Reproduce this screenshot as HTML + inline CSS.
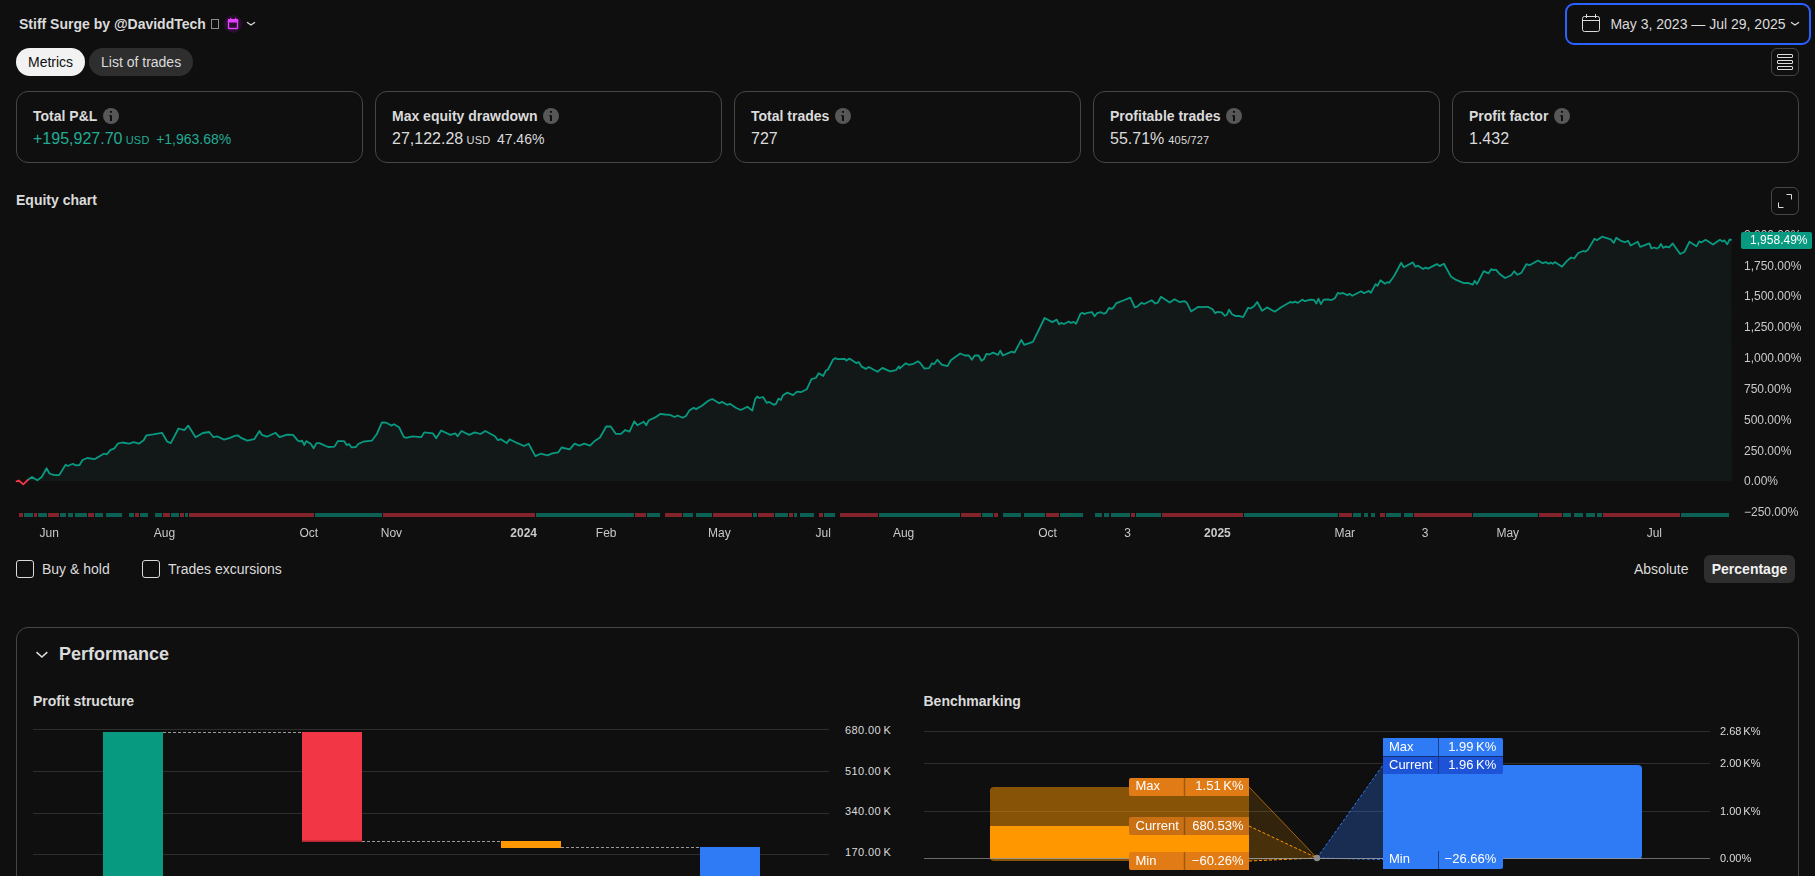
<!DOCTYPE html>
<html lang="en"><head><meta charset="utf-8"><title>Strategy report</title>
<style>
*{box-sizing:border-box;margin:0;padding:0}
html,body{width:1815px;height:876px;overflow:hidden;background:#0f0f0f}
body{position:relative;font-family:"Liberation Sans",Arial,sans-serif;color:#dbdbdb;font-size:14px}
.abs{position:absolute;white-space:nowrap}
.b{font-weight:bold}
.title{left:19px;top:16px;font-size:14px;line-height:16px;font-weight:bold;color:#dbdbdb}
.tab{top:48px;height:28px;border-radius:14px;line-height:28px;font-size:14px;padding:0 12px}
.card{top:91px;width:347px;height:72px;border:1px solid #464646;border-radius:12px}
.card .t{position:absolute;left:16px;top:16px;font-weight:bold;font-size:14px;line-height:16px;color:#dbdbdb;white-space:nowrap}
.card .v{position:absolute;left:16px;top:37px;font-size:16px;line-height:20px;white-space:nowrap;color:#dbdbdb}
.card .v small{font-size:11px;margin-left:3.300px;letter-spacing:0.200px}
.card .v span{font-size:14px;margin-left:6.600px}
.info{display:inline-block;vertical-align:top;margin-left:6px}
.card .green{color:#22ab94}
.sq{width:28px;height:28px;border:1px solid #464646;border-radius:6px}
.cb{width:18px;height:18px;border:1px solid #dbdbdb;border-radius:3px;top:560px}
.lbl{top:560px;line-height:18px;font-size:14px}
svg text{font-family:"Liberation Sans",Arial,sans-serif}
</style></head><body>

<div class="abs title">Stiff Surge by @DaviddTech <span style="display:inline-block;width:8px;height:10px;border:1px solid #8f8f8f;vertical-align:0px;margin-left:1px"></span></div>
<svg class="abs" style="left:224px;top:15px" width="18" height="18" viewBox="0 0 18 18"><circle cx="9" cy="9" r="9" fill="#2a0f30"/><rect x="4.500" y="4.700" width="9" height="8.800" rx="0.800" fill="none" stroke="#e040fb" stroke-width="1.400"/><rect x="3.800" y="4" width="10.400" height="3.500" rx="1" fill="#e040fb"/><rect x="6" y="3" width="1.200" height="2" fill="#e040fb"/><rect x="11" y="3" width="1.200" height="2" fill="#e040fb"/></svg>
<svg class="abs" style="left:245px;top:19.300px" width="12" height="10" viewBox="0 0 12 10"><path d="M2 3.200l4 2.900 4-2.900" fill="none" stroke="#dbdbdb" stroke-width="1.200"/></svg>

<div class="abs" style="left:1565px;top:3px;width:246px;height:42px;border:2px solid #2962ff;border-radius:9px"></div>
<svg class="abs" style="left:1581px;top:13px" width="20" height="20" viewBox="0 0 20 20"><rect x="1.5" y="3.5" width="17" height="15" rx="2" fill="none" stroke="#dbdbdb" stroke-width="1"/><path d="M1.500 7.500h17M5.500 1v4M14.500 1v4" stroke="#dbdbdb" stroke-width="1" fill="none"/></svg>
<div class="abs" style="left:1610.400px;top:15px;font-size:14px;line-height:18px;color:#dbdbdb">May 3, 2023 — Jul 29, 2025</div>
<svg class="abs" style="left:1789px;top:19.300px" width="12" height="10" viewBox="0 0 12 10"><path d="M2 3.200l4 2.900 4-2.900" fill="none" stroke="#dbdbdb" stroke-width="1.200"/></svg>

<div class="abs tab" style="left:16px;background:#f2f2f2;color:#0f0f0f">Metrics</div>
<div class="abs tab" style="left:89px;background:#2e2e2e;color:#dbdbdb">List of trades</div>
<div class="abs sq" style="left:1771px;top:48px"></div>
<svg class="abs" style="left:1776px;top:53px" width="18" height="18" viewBox="0 0 18 18"><g fill="none" stroke="#dbdbdb" stroke-width="1"><rect x="1.5" y="1.5" width="15" height="3" rx="0.5"/><rect x="1.5" y="7.5" width="15" height="3" rx="0.5"/><rect x="1.5" y="13.5" width="15" height="3" rx="0.5"/></g></svg>

<div class="abs card" style="left:16px"><div class="t">Total P&amp;L<svg class="info" width="16" height="16" viewBox="0 0 16 16"><circle cx="8" cy="8" r="8" fill="#575757"/><path d="M7 3h2v1.800h-2zM6 7.200h3v5.800h-2v-4.700h-1z" fill="#0f0f0f"/></svg></div><div class="v green">+195,927.70<small>USD</small><span>+1,963.68%</span></div></div>
<div class="abs card" style="left:375px"><div class="t">Max equity drawdown<svg class="info" width="16" height="16" viewBox="0 0 16 16"><circle cx="8" cy="8" r="8" fill="#575757"/><path d="M7 3h2v1.800h-2zM6 7.200h3v5.800h-2v-4.700h-1z" fill="#0f0f0f"/></svg></div><div class="v">27,122.28<small>USD</small><span>47.46%</span></div></div>
<div class="abs card" style="left:734px"><div class="t">Total trades<svg class="info" width="16" height="16" viewBox="0 0 16 16"><circle cx="8" cy="8" r="8" fill="#575757"/><path d="M7 3h2v1.800h-2zM6 7.200h3v5.800h-2v-4.700h-1z" fill="#0f0f0f"/></svg></div><div class="v">727</div></div>
<div class="abs card" style="left:1093px"><div class="t">Profitable trades<svg class="info" width="16" height="16" viewBox="0 0 16 16"><circle cx="8" cy="8" r="8" fill="#575757"/><path d="M7 3h2v1.800h-2zM6 7.200h3v5.800h-2v-4.700h-1z" fill="#0f0f0f"/></svg></div><div class="v">55.71%<small style="margin-left:4px">405/727</small></div></div>
<div class="abs card" style="left:1452px"><div class="t">Profit factor<svg class="info" width="16" height="16" viewBox="0 0 16 16"><circle cx="8" cy="8" r="8" fill="#575757"/><path d="M7 3h2v1.800h-2zM6 7.200h3v5.800h-2v-4.700h-1z" fill="#0f0f0f"/></svg></div><div class="v">1.432</div></div>

<div class="abs b" style="left:16px;top:192px;line-height:16px">Equity chart</div>
<div class="abs sq" style="left:1771px;top:187px"></div>
<svg class="abs" style="left:1776px;top:192px" width="18" height="18" viewBox="0 0 18 18"><path d="M10.5 2.5h5v5M2.5 10.500v5h5" fill="none" stroke="#dbdbdb" stroke-width="1"/></svg>


<div class="abs cb" style="left:16px"></div><div class="abs lbl" style="left:42px">Buy &amp; hold</div>
<div class="abs cb" style="left:142px"></div><div class="abs lbl" style="left:168px">Trades excursions</div>
<div class="abs" style="left:1634px;top:560px;line-height:18px">Absolute</div>
<div class="abs b" style="left:1704px;top:555px;width:91px;height:28px;line-height:28px;text-align:center;background:#2e2e2e;border-radius:6px;color:#f2f2f2">Percentage</div>

<div class="abs" style="left:16px;top:627px;width:1783px;height:300px;border:1px solid #464646;border-radius:12px"></div>
<svg class="abs" style="left:34px;top:647px" width="16" height="14" viewBox="0 0 16 14"><path d="M2.500 5.200l5.400 4.800 5.400-4.800" fill="none" stroke="#dbdbdb" stroke-width="1.600"/></svg>
<div class="abs b" style="left:59px;top:643px;font-size:18px;line-height:22px">Performance</div>
<div class="abs b" style="left:33px;top:693px;line-height:16px">Profit structure</div>
<div class="abs b" style="left:923.500px;top:693px;line-height:16px">Benchmarking</div>

<svg class="abs" style="left:0;top:700px" width="910" height="176" viewBox="0 700 910 176">
<g stroke="#2e2e2e" stroke-width="1">
<path d="M33 729.500H829M33 771.500H829M33 813.500H829M33 854.500H829"/>
</g>
<g font-size="11" fill="#dbdbdb" style="letter-spacing:0.400px;word-spacing:-0.900px">
<text x="845" y="734">680.00 K</text><text x="845" y="775">510.00 K</text><text x="845" y="815">340.00 K</text><text x="845" y="856">170.00 K</text>
</g>
<rect x="103" y="732" width="60" height="150" fill="#089981"/>
<rect x="302" y="732" width="60" height="110" fill="#f23645"/>
<rect x="302" y="840.500" width="60" height="1.500" fill="#b22833"/>
<rect x="501" y="841" width="60" height="7" fill="#ff9800"/>
<rect x="700" y="847" width="60" height="40" fill="#2f7af5"/>
<g stroke="#9a9a9a" stroke-width="1" stroke-dasharray="3 2" fill="none">
<path d="M163 732.500H302M362 841.500H501M561 847.500H700"/>
</g>
</svg>

<svg class="abs" style="left:0;top:225px;will-change:transform" width="1815" height="325" viewBox="0 225 1815 325">
<path d="M27.7,481 L27.7,480 L32,477 L37.3,480.3 L41.7,477 L46.6,468.3 L49.5,473.5 L54.3,475.1 L59.2,475.1 L65.6,464.8 L67.9,466 L72.8,463.8 L75.7,465.4 L79.6,465 L82.5,460 L87.3,458 L94.5,459.2 L103.8,453.7 L106.7,454.3 L110.6,449.9 L114.5,448.3 L117.8,443.7 L122.3,442.5 L129,443.7 L133.9,442.1 L138.8,443.7 L143.6,440.2 L146.5,435.3 L153.3,434.3 L162,432.8 L167.3,441.7 L170.8,443.1 L178.5,428.5 L184.4,430.1 L188.2,425.6 L195.6,437.2 L202.8,433 L209.2,432 L213.5,437.2 L217,436.3 L224.1,439.6 L230,437.8 L234.8,435.9 L237.7,435.3 L241.6,438.2 L247.4,440.7 L254.2,439.2 L259.5,431 L262,434.9 L266.8,436.7 L275.6,432.8 L279.5,437.2 L287.2,434.7 L293,434.9 L297.9,440.7 L300,441.5 L302,440.7 L304.3,445 L306.2,441.1 L310.7,443.7 L313.6,448.3 L316.5,443.1 L319.4,443.1 L328.1,447 L334.5,446.6 L337.8,441.1 L344.2,441.1 L346.6,445 L348.9,444 L351.4,447.3 L355.9,447 L358.2,444 L363.1,441.7 L371.8,440.7 L376.7,434.3 L381.9,422.3 L386.4,422.7 L391.2,425.6 L394.1,424.2 L399,427.2 L403.8,436.9 L405.8,437.8 L412.6,436.3 L421.3,437.2 L424.2,432.4 L432.9,433.4 L436.2,438.2 L441.1,430.5 L450.4,434.9 L455.3,433.4 L457.6,436.3 L461.5,431 L469.2,434.9 L474.7,432.4 L480.5,434 L485.3,431 L495,436.3 L497.9,440.2 L500.9,439.2 L506.7,443.1 L509.6,439.2 L516.4,442.7 L524.1,446 L528.6,443.7 L535.4,456.1 L540.6,453.7 L547.4,455.3 L552.3,453.4 L558.1,452.4 L561.6,447.5 L569.7,449.3 L574.6,443.7 L579.4,445.6 L584.3,443.7 L590.1,445.6 L595,440.7 L600,437.5 L606.2,426.5 L610.7,426.5 L615.9,433.9 L621,433.9 L625.2,430 L629.5,431.6 L634.3,421.3 L637.3,425.2 L643.7,421.7 L646.2,425.2 L648.9,420.3 L655.3,417.4 L660.2,413.9 L665,414.5 L669.9,414.9 L674.7,417 L677.6,415.5 L682.5,417.8 L686,416 L689.3,410.6 L693.7,407.7 L696.1,409.1 L701.9,405.8 L708.7,400.5 L712.2,399 L719.3,403.2 L721.9,401.9 L727.1,404.8 L730,403.8 L735.8,407.7 L740.7,410 L747.5,406.7 L752.3,410.6 L755.2,399 L757.2,396.5 L759.1,398 L763,397 L766.9,402.9 L769.2,401.9 L773.7,404.8 L776,403.8 L778.5,398.6 L780.9,400 L782.8,395.5 L787.3,392.6 L793.1,395.1 L797,391.6 L800.9,392.2 L806.7,389.3 L811.5,379.2 L815.8,378 L818.7,373.2 L823.2,376.1 L825.7,370.8 L828,369.5 L832.9,359.8 L835.2,358.2 L837.7,359.2 L844.5,358.8 L846.5,360.5 L849.4,358.6 L856.2,363.1 L858.7,362.1 L861.6,366.6 L865.9,368.9 L868.8,367 L877.5,371.8 L882.4,367.9 L890.1,371.4 L895.9,370.2 L898.9,366.4 L900,368.5 L902.3,366.1 L905.8,363.2 L908.7,364.8 L913.6,363.8 L917.9,361.3 L920.4,363.2 L924.3,368.5 L929.1,368.1 L932,363.2 L934,364.2 L937.3,359.7 L941.7,364.6 L947.5,366.1 L950.8,360.3 L960.2,353.5 L965,355.5 L968.9,355.5 L971.8,359.7 L974.7,355.5 L978.6,355.5 L981.5,360.7 L983.8,359.3 L986.4,353.9 L989.3,354.5 L993.1,352.6 L998,354.9 L1000.3,350.6 L1002.9,355.5 L1011.6,351.6 L1014.5,352.6 L1021.3,339.9 L1024.2,344.8 L1032.9,341.9 L1044.6,318 L1052.3,322.1 L1056.8,319.6 L1059.1,324.4 L1061.1,322.9 L1064,324 L1068.8,321.5 L1070.8,322.9 L1073.7,321.9 L1076,323.8 L1080.5,313.7 L1082.4,312.8 L1084.4,314.1 L1087.3,312.8 L1092.1,312.2 L1094.6,316.3 L1097,313.2 L1100.9,312.2 L1103.8,313.7 L1106.1,312.8 L1109,307.9 L1111.5,308.9 L1113.5,307.5 L1116.4,303.1 L1123.2,300.5 L1130.3,297.6 L1134.8,307.3 L1137.1,306.6 L1141.6,302.7 L1144.1,304 L1151.7,300.2 L1155.2,303.5 L1157.7,302.7 L1161,296.7 L1169.7,302.5 L1174.6,299.2 L1179.4,302.1 L1184.3,301.1 L1186.8,302.7 L1191.1,311.4 L1197.9,307 L1200,307.2 L1207.8,306.8 L1212.6,309.3 L1215.1,313.2 L1217.5,311.9 L1221.7,312.3 L1224.8,315.8 L1226.8,314.8 L1229.1,309.7 L1232,314.2 L1235.9,316.1 L1238.8,315.8 L1243.1,317.1 L1248.1,307.8 L1250.5,308.4 L1254.3,305.9 L1257.2,302 L1262.1,310.7 L1267,307.4 L1274.7,311.7 L1281.5,307 L1290.2,302 L1293.1,302.6 L1295.1,301.6 L1298,302.9 L1302.3,299.6 L1304.8,301.2 L1310.6,299.6 L1313.9,300 L1316.4,303.5 L1318.4,298.7 L1320.9,304.1 L1323.6,299.6 L1328.1,299.3 L1331,300.2 L1334.9,298.3 L1337.8,292.9 L1340.7,293.8 L1342.6,292.9 L1347.5,295.2 L1349.4,293.8 L1352.3,295.8 L1361.1,291.3 L1364,293.2 L1368.8,290.9 L1370.8,292.9 L1375.6,284.1 L1377.6,285.7 L1380.5,280.2 L1384.9,283.7 L1387.3,282.2 L1389.2,282.8 L1394.1,276 L1401.2,262.8 L1403.8,267.2 L1412.9,262.4 L1415.4,266.7 L1417.9,265.7 L1423.2,269 L1425.5,267.6 L1428,268.6 L1436.8,264.1 L1439.7,266.1 L1443.9,263.7 L1450.9,276.4 L1456.2,279.9 L1463.9,283.2 L1467.8,282.8 L1472.7,284.7 L1474.6,280.8 L1476.9,284.1 L1483.7,271.1 L1488.6,273.4 L1491.1,269.2 L1493.4,270.1 L1495.9,269.6 L1500,274.3 L1505.1,278 L1511.2,275.3 L1514.2,271.3 L1517.3,274.7 L1521.3,272.9 L1526.4,264.2 L1529.5,265.2 L1538,260.5 L1542.7,263.2 L1545.7,262.1 L1548.8,263.8 L1550.8,262.5 L1552.8,263.8 L1554.9,262.1 L1562,266.8 L1566.7,261.1 L1571.1,257.5 L1574.2,258.5 L1578.2,253 L1583.3,251 L1585.3,251.6 L1587.8,249.9 L1594.5,238.8 L1596.9,240.2 L1602,236.7 L1610.8,239.4 L1613.8,242.8 L1616.2,237.8 L1620.9,240.8 L1625,242.2 L1628,240.8 L1630.7,245.5 L1637.8,241.8 L1640.2,246.9 L1649.4,243.4 L1651.4,248.3 L1654.4,247.5 L1656.5,248.5 L1658.9,247.5 L1660.9,243.9 L1663.2,247.9 L1665.6,246.5 L1669.1,247.3 L1672.7,243.4 L1680.2,254 L1684.3,252 L1689.4,241.8 L1696.5,246.3 L1699.1,241.4 L1701.2,242.4 L1705.6,239.8 L1713,244.5 L1719.9,239.8 L1722.5,241.4 L1724.5,240.4 L1727.2,244.3 L1729.6,239.4 L1731.7,240.2 L1732,481 Z" fill="#111817"/>
<polyline points="27.7,480 32,477 37.3,480.3 41.7,477 46.6,468.3 49.5,473.5 54.3,475.1 59.2,475.1 65.6,464.8 67.9,466 72.8,463.8 75.7,465.4 79.6,465 82.5,460 87.3,458 94.5,459.2 103.8,453.7 106.7,454.3 110.6,449.9 114.5,448.3 117.8,443.7 122.3,442.5 129,443.7 133.9,442.1 138.8,443.7 143.6,440.2 146.5,435.3 153.3,434.3 162,432.8 167.3,441.7 170.8,443.1 178.5,428.5 184.4,430.1 188.2,425.6 195.6,437.2 202.8,433 209.2,432 213.5,437.2 217,436.3 224.1,439.6 230,437.8 234.8,435.9 237.7,435.3 241.6,438.2 247.4,440.7 254.2,439.2 259.5,431 262,434.9 266.8,436.7 275.6,432.8 279.5,437.2 287.2,434.7 293,434.9 297.9,440.7 300,441.5 302,440.7 304.3,445 306.2,441.1 310.7,443.7 313.6,448.3 316.5,443.1 319.4,443.1 328.1,447 334.5,446.6 337.8,441.1 344.2,441.1 346.6,445 348.9,444 351.4,447.3 355.9,447 358.2,444 363.1,441.7 371.8,440.7 376.7,434.3 381.9,422.3 386.4,422.7 391.2,425.6 394.1,424.2 399,427.2 403.8,436.9 405.8,437.8 412.6,436.3 421.3,437.2 424.2,432.4 432.9,433.4 436.2,438.2 441.1,430.5 450.4,434.9 455.3,433.4 457.6,436.3 461.5,431 469.2,434.9 474.7,432.4 480.5,434 485.3,431 495,436.3 497.9,440.2 500.9,439.2 506.7,443.1 509.6,439.2 516.4,442.7 524.1,446 528.6,443.7 535.4,456.1 540.6,453.7 547.4,455.3 552.3,453.4 558.1,452.4 561.6,447.5 569.7,449.3 574.6,443.7 579.4,445.6 584.3,443.7 590.1,445.6 595,440.7 600,437.5 606.2,426.5 610.7,426.5 615.9,433.9 621,433.9 625.2,430 629.5,431.6 634.3,421.3 637.3,425.2 643.7,421.7 646.2,425.2 648.9,420.3 655.3,417.4 660.2,413.9 665,414.5 669.9,414.9 674.7,417 677.6,415.5 682.5,417.8 686,416 689.3,410.6 693.7,407.7 696.1,409.1 701.9,405.8 708.7,400.5 712.2,399 719.3,403.2 721.9,401.9 727.1,404.8 730,403.8 735.8,407.7 740.7,410 747.5,406.7 752.3,410.6 755.2,399 757.2,396.5 759.1,398 763,397 766.9,402.9 769.2,401.9 773.7,404.8 776,403.8 778.5,398.6 780.9,400 782.8,395.5 787.3,392.6 793.1,395.1 797,391.6 800.9,392.2 806.7,389.3 811.5,379.2 815.8,378 818.7,373.2 823.2,376.1 825.7,370.8 828,369.5 832.9,359.8 835.2,358.2 837.7,359.2 844.5,358.8 846.5,360.5 849.4,358.6 856.2,363.1 858.7,362.1 861.6,366.6 865.9,368.9 868.8,367 877.5,371.8 882.4,367.9 890.1,371.4 895.9,370.2 898.9,366.4 900,368.5 902.3,366.1 905.8,363.2 908.7,364.8 913.6,363.8 917.9,361.3 920.4,363.2 924.3,368.5 929.1,368.1 932,363.2 934,364.2 937.3,359.7 941.7,364.6 947.5,366.1 950.8,360.3 960.2,353.5 965,355.5 968.9,355.5 971.8,359.7 974.7,355.5 978.6,355.5 981.5,360.7 983.8,359.3 986.4,353.9 989.3,354.5 993.1,352.6 998,354.9 1000.3,350.6 1002.9,355.5 1011.6,351.6 1014.5,352.6 1021.3,339.9 1024.2,344.8 1032.9,341.9 1044.6,318 1052.3,322.1 1056.8,319.6 1059.1,324.4 1061.1,322.9 1064,324 1068.8,321.5 1070.8,322.9 1073.7,321.9 1076,323.8 1080.5,313.7 1082.4,312.8 1084.4,314.1 1087.3,312.8 1092.1,312.2 1094.6,316.3 1097,313.2 1100.9,312.2 1103.8,313.7 1106.1,312.8 1109,307.9 1111.5,308.9 1113.5,307.5 1116.4,303.1 1123.2,300.5 1130.3,297.6 1134.8,307.3 1137.1,306.6 1141.6,302.7 1144.1,304 1151.7,300.2 1155.2,303.5 1157.7,302.7 1161,296.7 1169.7,302.5 1174.6,299.2 1179.4,302.1 1184.3,301.1 1186.8,302.7 1191.1,311.4 1197.9,307 1200,307.2 1207.8,306.8 1212.6,309.3 1215.1,313.2 1217.5,311.9 1221.7,312.3 1224.8,315.8 1226.8,314.8 1229.1,309.7 1232,314.2 1235.9,316.1 1238.8,315.8 1243.1,317.1 1248.1,307.8 1250.5,308.4 1254.3,305.9 1257.2,302 1262.1,310.7 1267,307.4 1274.7,311.7 1281.5,307 1290.2,302 1293.1,302.6 1295.1,301.6 1298,302.9 1302.3,299.6 1304.8,301.2 1310.6,299.6 1313.9,300 1316.4,303.5 1318.4,298.7 1320.9,304.1 1323.6,299.6 1328.1,299.3 1331,300.2 1334.9,298.3 1337.8,292.9 1340.7,293.8 1342.6,292.9 1347.5,295.2 1349.4,293.8 1352.3,295.8 1361.1,291.3 1364,293.2 1368.8,290.9 1370.8,292.9 1375.6,284.1 1377.6,285.7 1380.5,280.2 1384.9,283.7 1387.3,282.2 1389.2,282.8 1394.1,276 1401.2,262.8 1403.8,267.2 1412.9,262.4 1415.4,266.7 1417.9,265.7 1423.2,269 1425.5,267.6 1428,268.6 1436.8,264.1 1439.7,266.1 1443.9,263.7 1450.9,276.4 1456.2,279.9 1463.9,283.2 1467.8,282.8 1472.7,284.7 1474.6,280.8 1476.9,284.1 1483.7,271.1 1488.6,273.4 1491.1,269.2 1493.4,270.1 1495.9,269.6 1500,274.3 1505.1,278 1511.2,275.3 1514.2,271.3 1517.3,274.7 1521.3,272.9 1526.4,264.2 1529.5,265.2 1538,260.5 1542.7,263.2 1545.7,262.1 1548.8,263.8 1550.8,262.5 1552.8,263.8 1554.9,262.1 1562,266.8 1566.7,261.1 1571.1,257.5 1574.2,258.5 1578.2,253 1583.3,251 1585.3,251.6 1587.8,249.9 1594.5,238.8 1596.9,240.2 1602,236.7 1610.8,239.4 1613.8,242.8 1616.2,237.8 1620.9,240.8 1625,242.2 1628,240.8 1630.7,245.5 1637.8,241.8 1640.2,246.9 1649.4,243.4 1651.4,248.3 1654.4,247.5 1656.5,248.5 1658.9,247.5 1660.9,243.9 1663.2,247.9 1665.6,246.5 1669.1,247.3 1672.7,243.4 1680.2,254 1684.3,252 1689.4,241.8 1696.5,246.3 1699.1,241.4 1701.2,242.4 1705.6,239.8 1713,244.5 1719.9,239.8 1722.5,241.4 1724.5,240.4 1727.2,244.3 1729.6,239.4 1731.7,240.2" fill="none" stroke="#089981" stroke-width="1.8" stroke-linejoin="round" stroke-linecap="butt"/>
<polyline points="16.5,481.3 18.8,480.5 23.3,484.4 27.7,480" fill="none" stroke="#f23645" stroke-width="1.8" stroke-linejoin="round" stroke-linecap="round"/>
<rect x="19" y="513" width="4" height="4" fill="#83242c"/><rect x="24" y="513" width="9" height="4" fill="#0b5f53"/><rect x="34" y="513" width="3" height="4" fill="#83242c"/><rect x="38" y="513" width="9" height="4" fill="#0b5f53"/><rect x="48" y="513" width="11" height="4" fill="#83242c"/><rect x="60" y="513" width="6" height="4" fill="#0b5f53"/><rect x="68" y="513" width="5" height="4" fill="#0b5f53"/><rect x="75" y="513" width="12" height="4" fill="#0b5f53"/><rect x="88" y="513" width="6" height="4" fill="#83242c"/><rect x="95" y="513" width="8" height="4" fill="#0b5f53"/><rect x="106" y="513" width="16" height="4" fill="#0b5f53"/><rect x="129" y="513" width="5" height="4" fill="#0b5f53"/><rect x="135" y="513" width="4" height="4" fill="#83242c"/><rect x="140" y="513" width="8" height="4" fill="#0b5f53"/><rect x="155" y="513" width="7" height="4" fill="#0b5f53"/><rect x="163" y="513" width="7" height="4" fill="#83242c"/><rect x="171" y="513" width="8" height="4" fill="#0b5f53"/><rect x="180" y="513" width="4" height="4" fill="#83242c"/><rect x="185" y="513" width="3" height="4" fill="#0b5f53"/><rect x="189" y="513" width="125" height="4" fill="#83242c"/><rect x="315" y="513" width="67" height="4" fill="#0b5f53"/><rect x="383" y="513" width="152" height="4" fill="#83242c"/><rect x="536" y="513" width="98" height="4" fill="#0b5f53"/><rect x="635" y="513" width="11" height="4" fill="#83242c"/><rect x="647" y="513" width="13" height="4" fill="#0b5f53"/><rect x="665" y="513" width="17" height="4" fill="#83242c"/><rect x="683" y="513" width="10" height="4" fill="#0b5f53"/><rect x="696" y="513" width="16" height="4" fill="#0b5f53"/><rect x="713" y="513" width="39" height="4" fill="#83242c"/><rect x="753" y="513" width="4" height="4" fill="#0b5f53"/><rect x="758" y="513" width="16" height="4" fill="#83242c"/><rect x="775" y="513" width="13" height="4" fill="#0b5f53"/><rect x="789" y="513" width="4" height="4" fill="#83242c"/><rect x="794" y="513" width="3" height="4" fill="#0b5f53"/><rect x="800" y="513" width="14" height="4" fill="#0b5f53"/><rect x="819" y="513" width="4" height="4" fill="#83242c"/><rect x="824" y="513" width="11" height="4" fill="#0b5f53"/><rect x="840" y="513" width="38" height="4" fill="#83242c"/><rect x="879" y="513" width="81" height="4" fill="#0b5f53"/><rect x="961" y="513" width="20" height="4" fill="#83242c"/><rect x="982" y="513" width="11" height="4" fill="#0b5f53"/><rect x="994" y="513" width="4" height="4" fill="#83242c"/><rect x="1003" y="513" width="18" height="4" fill="#0b5f53"/><rect x="1024" y="513" width="21" height="4" fill="#0b5f53"/><rect x="1046" y="513" width="13" height="4" fill="#83242c"/><rect x="1060" y="513" width="23" height="4" fill="#0b5f53"/><rect x="1095" y="513" width="7" height="4" fill="#0b5f53"/><rect x="1104" y="513" width="5" height="4" fill="#0b5f53"/><rect x="1111" y="513" width="19" height="4" fill="#0b5f53"/><rect x="1131" y="513" width="4" height="4" fill="#83242c"/><rect x="1136" y="513" width="25" height="4" fill="#0b5f53"/><rect x="1162" y="513" width="81" height="4" fill="#83242c"/><rect x="1244" y="513" width="94" height="4" fill="#0b5f53"/><rect x="1339" y="513" width="13" height="4" fill="#83242c"/><rect x="1353" y="513" width="8" height="4" fill="#0b5f53"/><rect x="1364" y="513" width="4" height="4" fill="#0b5f53"/><rect x="1371" y="513" width="4" height="4" fill="#0b5f53"/><rect x="1380" y="513" width="5" height="4" fill="#83242c"/><rect x="1386" y="513" width="15" height="4" fill="#0b5f53"/><rect x="1404" y="513" width="9" height="4" fill="#0b5f53"/><rect x="1414" y="513" width="58" height="4" fill="#83242c"/><rect x="1473" y="513" width="65" height="4" fill="#0b5f53"/><rect x="1539" y="513" width="23" height="4" fill="#83242c"/><rect x="1563" y="513" width="8" height="4" fill="#0b5f53"/><rect x="1574" y="513" width="9" height="4" fill="#0b5f53"/><rect x="1586" y="513" width="9" height="4" fill="#0b5f53"/><rect x="1597" y="513" width="5" height="4" fill="#0b5f53"/><rect x="1603" y="513" width="77" height="4" fill="#83242c"/><rect x="1681" y="513" width="48" height="4" fill="#0b5f53"/>
<g font-size="12" fill="#c9c9c9"><text x="49.2" y="537" text-anchor="middle">Jun</text><text x="164.5" y="537" text-anchor="middle">Aug</text><text x="308.8" y="537" text-anchor="middle">Oct</text><text x="391.4" y="537" text-anchor="middle">Nov</text><text x="523.7" y="537" text-anchor="middle" font-weight="bold">2024</text><text x="606.2" y="537" text-anchor="middle">Feb</text><text x="719.4" y="537" text-anchor="middle">May</text><text x="823.2" y="537" text-anchor="middle">Jul</text><text x="903.6" y="537" text-anchor="middle">Aug</text><text x="1047.6" y="537" text-anchor="middle">Oct</text><text x="1127.5" y="537" text-anchor="middle">3</text><text x="1217.4" y="537" text-anchor="middle" font-weight="bold">2025</text><text x="1344.8" y="537" text-anchor="middle">Mar</text><text x="1425.2" y="537" text-anchor="middle">3</text><text x="1507.8" y="537" text-anchor="middle">May</text><text x="1654.3" y="537" text-anchor="middle">Jul</text></g>
<g font-size="12" fill="#c9c9c9"><text x="1744" y="239">2,000.00%</text><text x="1744" y="270">1,750.00%</text><text x="1744" y="300">1,500.00%</text><text x="1744" y="331">1,250.00%</text><text x="1744" y="362">1,000.00%</text><text x="1744" y="393">750.00%</text><text x="1744" y="424">500.00%</text><text x="1744" y="455">250.00%</text><text x="1744" y="485">0.00%</text><text x="1744" y="516">−250.00%</text></g>
<rect x="1741" y="232" width="71" height="17" rx="2" fill="#089981"/>
<text x="1807.500" y="244" font-size="12" fill="#ffffff" text-anchor="end">1,958.49%</text>
</svg>
<svg class="abs" style="left:920px;top:720px;will-change:transform" width="870" height="156" viewBox="920 720 870 156">
<g stroke="#2e2e2e" stroke-width="1">
<path d="M924 731.500H1710M924 763.500H1710M924 811.500H1710"/>
</g>
<path d="M924 858.500H1710" stroke="#6b6b6b" stroke-width="1"/>
<g font-size="11" fill="#dbdbdb" style="word-spacing:-1.100px">
<text x="1720" y="735">2.68 K%</text><text x="1720" y="767">2.00 K%</text><text x="1720" y="815">1.00 K%</text><text x="1720" y="862">0.00%</text>
</g>
<!-- benchmarking orange -->
<path d="M994 787H1249V861H994a4 4 0 0 1-4-4V791a4 4 0 0 1 4-4z" fill="#ff9800" fill-opacity="0.500"/>
<rect x="990" y="826" width="259" height="32.500" fill="#ff9800"/>
<path d="M1249 787L1317 858L1249 861z" fill="#ff9800" fill-opacity="0.150"/>
<path d="M1249 826L1317 858L1249 861z" fill="#ff9800" fill-opacity="0.110"/>
<path d="M1249 787L1317 858" stroke="#c77a0a" stroke-width="0.800" fill="none"/>
<path d="M1249 826L1317 858M1249 861L1317 858" stroke="#ff9800" stroke-width="1" stroke-dasharray="3 2" fill="none"/>
<path d="M1317 858L1383 765V859z" fill="#2f7af5" fill-opacity="0.290"/>
<path d="M1317 858L1383 765M1317 858L1383 859.500" stroke="#2f7af5" stroke-width="1" stroke-dasharray="3 2" fill="none"/>
<path d="M1383 765H1638a4 4 0 0 1 4 4V855a4 4 0 0 1-4 4H1383z" fill="#2f7af5"/>
<path d="M990 858.500H1642" stroke="#9a9a9a" stroke-opacity="0.800" stroke-width="1"/>
<circle cx="1317" cy="858" r="3.200" fill="#8c8c8c"/>

<g font-size="13" fill="#ffffff" style="word-spacing:-1px">
<path d="M1131 778H1249V796H1131a2 2 0 0 1-2-2V780a2 2 0 0 1 2-2z" fill="#e07b16"/><rect x="1183.800" y="778" width="1.400" height="18" fill="#9c5a0e"/>
<text x="1135.500" y="790">Max</text><text x="1243.500" y="790" text-anchor="end">1.51 K%</text>
<path d="M1131 817H1249V835H1131a2 2 0 0 1-2-2V819a2 2 0 0 1 2-2z" fill="#c96f14"/><rect x="1183.800" y="817" width="1.400" height="18" fill="#8f500c"/>
<text x="1135.500" y="829.700">Current</text><text x="1243.500" y="829.700" text-anchor="end">680.53%</text>
<path d="M1131 852H1249V870H1131a2 2 0 0 1-2-2V854a2 2 0 0 1 2-2z" fill="#e07b16"/><rect x="1183.800" y="852" width="1.400" height="18" fill="#9c5a0e"/>
<text x="1135.500" y="864.700">Min</text><text x="1243.500" y="864.700" text-anchor="end">−60.26%</text>

<path d="M1383 738H1501a2 2 0 0 1 2 2V756H1383z" fill="#2f7af5"/><rect x="1438" y="738" width="1" height="18.500" fill="#1b3f8f"/>
<text x="1389" y="750.700">Max</text><text x="1496.300" y="750.700" text-anchor="end">1.99 K%</text>
<path d="M1383 756.500H1503V772a2 2 0 0 1-2 2H1383z" fill="#1d53d6"/><rect x="1438" y="756.500" width="1" height="17.500" fill="#163a9a"/>
<text x="1389" y="768.700">Current</text><text x="1496.300" y="768.700" text-anchor="end">1.96 K%</text>
<path d="M1383 851H1501a2 2 0 0 1 2 2V867a2 2 0 0 1-2 2H1383z" fill="#2f7af5"/><rect x="1438" y="851" width="1" height="18" fill="#1b3f8f"/>
<text x="1389" y="862.700">Min</text><text x="1496.300" y="862.700" text-anchor="end">−26.66%</text>
</g>
</svg>
</body></html>
